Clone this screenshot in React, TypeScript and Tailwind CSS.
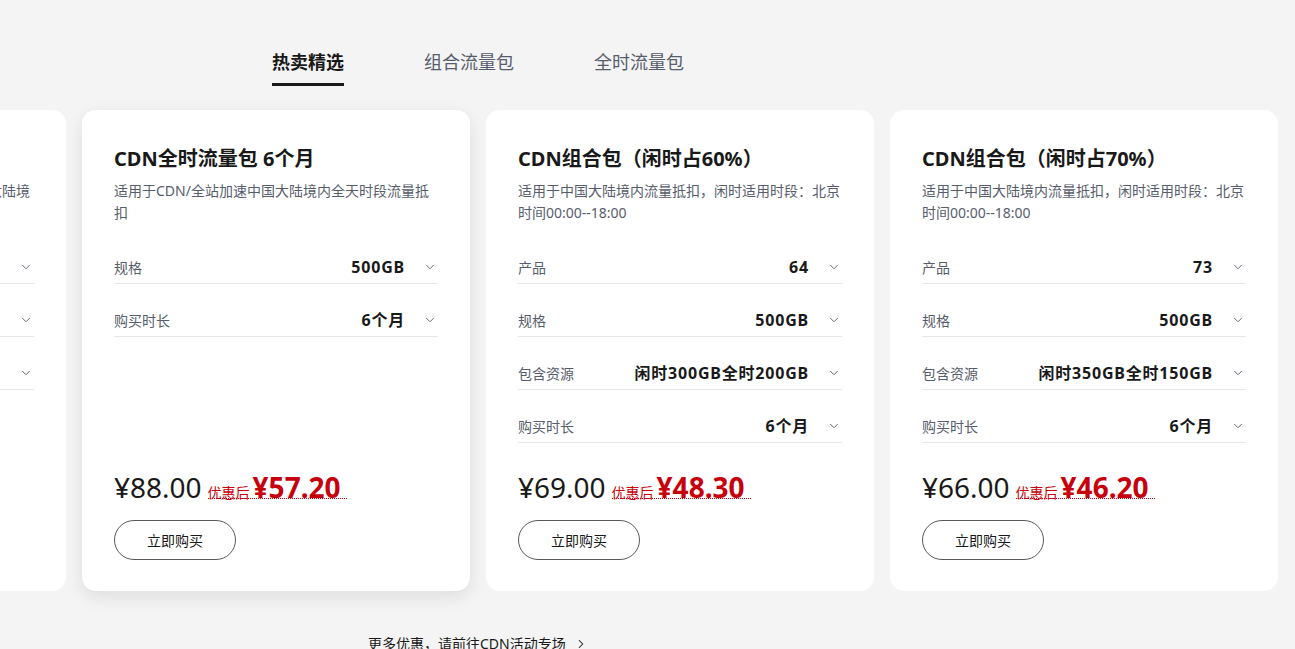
import { ChevronDown, ChevronRight } from "lucide-react";

type Row = { label: string; value: string };
type Card = {
  title: string;
  desc: string;
  rows: Row[];
  price: string;
  sale: string;
  active?: boolean;
};

const cards: Card[] = [
  {
    title: "CDN全时流量包 1年",
    desc: "适用于CDN/全站加速/边缘安全加速平台中国大陆境\n内全天时段流量抵扣",
    rows: [
      { label: "产品", value: "12" },
      { label: "规格", value: "1TB" },
      { label: "购买时长", value: "1年" },
    ],
    price: "¥120.00",
    sale: "¥78.00",
  },
  {
    title: "CDN全时流量包 6个月",
    desc: "适用于CDN/全站加速中国大陆境内全天时段流量抵扣",
    rows: [
      { label: "规格", value: "500GB" },
      { label: "购买时长", value: "6个月" },
    ],
    price: "¥88.00",
    sale: "¥57.20",
    active: true,
  },
  {
    title: "CDN组合包（闲时占60%）",
    desc: "适用于中国大陆境内流量抵扣，闲时适用时段：北京时间00:00--18:00",
    rows: [
      { label: "产品", value: "64" },
      { label: "规格", value: "500GB" },
      { label: "包含资源", value: "闲时300GB全时200GB" },
      { label: "购买时长", value: "6个月" },
    ],
    price: "¥69.00",
    sale: "¥48.30",
  },
  {
    title: "CDN组合包（闲时占70%）",
    desc: "适用于中国大陆境内流量抵扣，闲时适用时段：北京时间00:00--18:00",
    rows: [
      { label: "产品", value: "73" },
      { label: "规格", value: "500GB" },
      { label: "包含资源", value: "闲时350GB全时150GB" },
      { label: "购买时长", value: "6个月" },
    ],
    price: "¥66.00",
    sale: "¥46.20",
  },
];

const tabs = ["热卖精选", "组合流量包", "全时流量包"];

function PackageCard({ card }: { card: Card }) {
  return (
    <div
      className={
        card.active
          ? "flex h-[481px] w-[388px] shrink-0 flex-col rounded-[14px] bg-white px-8 pt-[33px] pb-[31px] shadow-[0_6px_18px_rgba(0,0,0,0.09)]"
          : "flex h-[481px] w-[388px] shrink-0 flex-col rounded-[14px] bg-white px-8 pt-[33px] pb-[31px]"
      }
    >
      <h3 className="text-[20px] leading-8 font-bold text-[#191919]">{card.title}</h3>
      <p className="mt-[5px] text-[14px] leading-[22px] whitespace-pre-line text-[#575d6c]">{card.desc}</p>

      {/* Options */}
      <div className="mt-[7px]">
        {card.rows.map((row) => (
          <div
            key={row.label}
            className="flex h-[53px] items-end border-b border-[#e6e6e6] pb-[4px]"
          >
            <div className="flex h-6 w-full items-center">
              <span className="text-[14px] text-[#575d6c]">{row.label}</span>
              <span className="ml-auto text-[16px] font-bold tracking-[0.8px] text-[#191919]">{row.value}</span>
              <ChevronDown className="ml-[18px] mr-[1px] h-[14px] w-[14px] text-[#575d6c]" strokeWidth={1.6} />
            </div>
          </div>
        ))}
      </div>

      {/* Price */}
      <div className="mt-auto flex h-9 items-baseline">
        <span className="text-[28px] leading-9 text-[#191919]">{card.price}</span>
        <span className="ml-[6px] border-b border-dotted border-[#c7000b] pr-[6px] text-[28px] leading-[10px] text-[#c7000b]">
          <span className="text-[14px]">优惠后</span>
          <span className="ml-[3px] font-bold">{card.sale}</span>
        </span>
      </div>

      <button className="mt-[15px] h-10 w-[122px] rounded-full border border-[#595959] bg-white text-[14px] text-[#191919]">
        立即购买
      </button>
    </div>
  );
}

export default function App() {
  return (
    <div
      className="h-[649px] overflow-hidden bg-[#f4f4f4]"
      style={{ fontFamily: '"Noto Sans", "Noto Sans CJK SC", sans-serif' }}
    >
      {/* Tabs */}
      <div className="flex gap-[80px] pt-[49px] pl-[272px]">
        {tabs.map((tab, i) => (
          <div
            key={tab}
            className={
              i === 0
                ? "border-b-[3px] border-[#191919] pb-[8px] text-[18px] leading-[26px] font-bold text-[#191919]"
                : "pb-[11px] text-[18px] leading-[26px] text-[#575d6c]"
            }
          >
            {tab}
          </div>
        ))}
      </div>

      {/* Cards */}
      <div className="mt-[24px] ml-[-322px] flex gap-4">
        {cards.map((card) => (
          <PackageCard key={card.title} card={card} />
        ))}
      </div>

      {/* More link */}
      <div className="mt-[43px] flex items-center pl-[368px] text-[14px] leading-5 text-[#191919]">
        <span>更多优惠，请前往CDN活动专场</span>
        <ChevronRight className="ml-2 h-[14px] w-[14px]" strokeWidth={1.8} />
      </div>
    </div>
  );
}
